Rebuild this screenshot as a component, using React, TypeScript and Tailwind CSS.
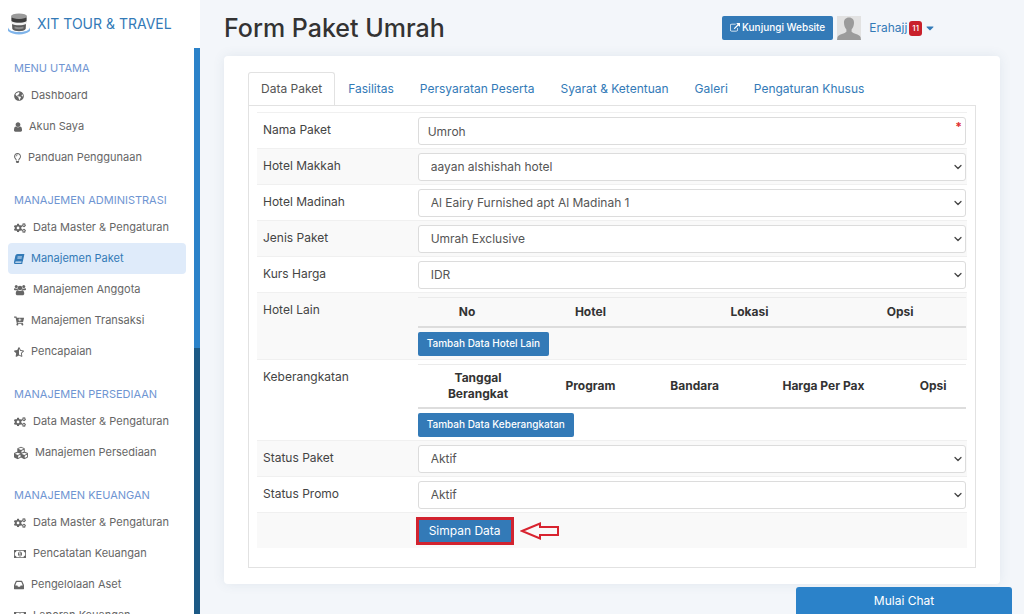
import React from "react";
import {
  FaGlobeAmericas,
  FaRegLightbulb,
  FaCogs,
  FaBook,
  FaCartPlus,
  FaStarHalfAlt,
  FaCubes,
  FaCaretDown,
} from "react-icons/fa";
import { ChevronDown } from "lucide-react";

type IconProps = { className?: string };

const UserIcon = ({ className }: IconProps) => (
  <svg viewBox="256 0 1280 1792" className={className} fill="currentColor" aria-hidden="true">
    <path d="M1536 1399q0 109-62.5 187t-150.5 78h-854q-88 0-150.5-78t-62.5-187q0-85 8.5-160.5t31.5-152 58.5-131 94-89 134.5-34.5q131 128 313 128t313-128q76 0 134.5 34.5t94 89 58.5 131 31.5 152 8.5 160.5zm-256-887q0 159-112.5 271.5t-271.5 112.5-271.5-112.5-112.5-271.5 112.5-271.5 271.5-112.5 271.5 112.5 112.5 271.5z" />
  </svg>
);

const UsersIcon = ({ className }: IconProps) => (
  <svg viewBox="0 0 24 24" className={className} fill="currentColor" aria-hidden="true">
    <circle cx="4.500" cy="5" r="3" />
    <circle cx="19.500" cy="5" r="3" />
    <circle cx="12" cy="8" r="4.600" />
    <path d="M2 8.500c1.500 1 3.500 1 5 .2.100 1.600.6 2.800 1.500 3.800H2.800C1 12.500 0 11.500 0 10.300c0-1.200.5-2.300 2-1.800zM22 8.500c-1.500 1-3.500 1-5 .2-.1 1.600-.6 2.800-1.500 3.800h5.700c1.800 0 2.800-1 2.800-2.200 0-1.200-.5-2.300-2-1.800z" />
    <path d="M7.500 12.500c2.500 2 6.500 2 9 0 2.500.2 4 3 4 6.500 0 2.200-1.300 3.500-3.500 3.500H7c-2.200 0-3.500-1.300-3.500-3.500 0-3.500 1.500-6.300 4-6.500z" />
  </svg>
);

const InboxIcon = ({ className }: IconProps) => (
  <svg viewBox="128 0 1536 1792" className={className} fill="currentColor" aria-hidden="true">
    <path d="M1151 960h316q-1-3-2.5-8.5t-2.5-7.5l-212-496h-708l-212 496q-1 3-2.5 8.5t-2.5 7.5h316l95 192h320zm513 30v482q0 26-19 45t-45 19h-1408q-26 0-45-19t-19-45v-482q0-62 25-123l238-552q10-25 36.5-42t52.5-17h832q26 0 52.5 17t36.5 42l238 552q25 61 25 123z" />
  </svg>
);

const MoneyIcon = ({ className }: IconProps) => (
  <svg viewBox="0 0 1920 1792" className={className} fill="currentColor" aria-hidden="true">
    <path d="M768 1152h384v-96h-128v-448h-114l-148 137 77 80q42-37 55-57h2v288h-128v96zm512-256q0 70-21 142t-59.5 134-101.5 101-138 39-138-39-101.5-101-59.5-134-21-142 21-142 59.5-134 101.5-101 138-39 138 39 101.5 101 59.5 134 21 142zm512 256v-512q-106 0-181-75t-75-181h-1152q0 106-75 181t-181 75v512q106 0 181 75t75 181h1152q0-106 75-181t181-75zm128-832v1152q0 26-19 45t-45 19h-1792q-26 0-45-19t-19-45v-1152q0-26 19-45t45-19h1792q26 0 45 19t19 45z" />
  </svg>
);

const ExternalLinkIcon = ({ className }: IconProps) => (
  <svg viewBox="0 0 1792 1792" className={className} fill="currentColor" aria-hidden="true">
    <path d="M1408 928v320q0 119-84.5 203.5t-203.5 84.5h-832q-119 0-203.5-84.5t-84.5-203.5v-832q0-119 84.5-203.5t203.5-84.5h704q14 0 23 9t9 23v64q0 14-9 23t-23 9h-704q-66 0-113 47t-47 113v832q0 66 47 113t113 47h832q66 0 113-47t47-113v-320q0-14 9-23t23-9h64q14 0 23 9t9 23zm384-864v512q0 26-19 45t-45 19-45-19l-176-176-652 652q-10 10-23 10t-23-10l-114-114q-10-10-10-23t10-23l652-652-176-176q-19-19-19-45t19-45 45-19h512q26 0 45 19t19 45z" />
  </svg>
);

const Logo = () => (
  <svg viewBox="0 0 24 24" className="size-6 shrink-0" aria-hidden="true">
    <path d="M1 15.500v3.500c5 4.500 17 4.500 22 0v-3.500c-1 3-5 4.500-11 4.500S2 18.500 1 15.500z" fill="#7fb4ea" />
    <path d="M4.500 4.500l.8 12.500c2 3 11.400 3 13.400 0l.8-12.500z" fill="#5a5a5a" />
    <ellipse cx="12" cy="4.300" rx="8" ry="2.800" fill="#9a9a9a" />
    <path d="M4.500 5.500c3.500 2 11.500 2 15 0v3.500c-3.500 2-11.500 2-15 0z" fill="#3d3d3d" />
    <path d="M4.800 9.500c3.500 1.800 10.900 1.800 14.400 0v2.500c-3.500 1.800-10.900 1.800-14.400 0z" fill="#f0f0f0" />
    <path d="M7.500 14.500c3 1 6 1 9 0v2c-3 1-6 1-9 0z" fill="#8d8d8d" />
  </svg>
);

const Avatar = () => (
  <svg viewBox="0 0 24 24" className="size-6 shrink-0" role="img" aria-label="Erahajj">
    <rect width="24" height="24" fill="#e2e2e2" />
    <path d="M12 1.500c-3.300 0-5.200 2.300-5 5.500.1 2.300.8 4.600 2.400 6.400v2.400c-1.200 1.800-7.600 2.200-8.900 5.200L0 24h24l-.5-3c-1.300-3-7.700-3.400-8.900-5.200v-2.400C16.200 11.600 16.900 9.300 17 7c.2-3.200-1.700-5.500-5-5.500z" fill="#9b9b9b" />
  </svg>
);

type Item = { label: string; Icon: React.ComponentType<IconProps>; icon: string; active?: boolean };

const sections: { title: string; items: Item[] }[] = [
  {
    title: "MENU UTAMA",
    items: [
      { label: "Dashboard", Icon: FaGlobeAmericas, icon: "size-[10px]" },
      { label: "Akun Saya", Icon: UserIcon, icon: "h-3 w-2" },
      { label: "Panduan Penggunaan", Icon: FaRegLightbulb, icon: "h-[10px] w-[7px]" },
    ],
  },
  {
    title: "MANAJEMEN ADMINISTRASI",
    items: [
      { label: "Data Master & Pengaturan", Icon: FaCogs, icon: "size-3" },
      { label: "Manajemen Paket", Icon: FaBook, icon: "size-[10px] -skew-x-12", active: true },
      { label: "Manajemen Anggota", Icon: UsersIcon, icon: "size-3" },
      { label: "Manajemen Transaksi", Icon: FaCartPlus, icon: "size-[10px]" },
      { label: "Pencapaian", Icon: FaStarHalfAlt, icon: "size-[10px]" },
    ],
  },
  {
    title: "MANAJEMEN PERSEDIAAN",
    items: [
      { label: "Data Master & Pengaturan", Icon: FaCogs, icon: "size-3" },
      { label: "Manajemen Persediaan", Icon: FaCubes, icon: "size-[14px]" },
    ],
  },
  {
    title: "MANAJEMEN KEUANGAN",
    items: [
      { label: "Data Master & Pengaturan", Icon: FaCogs, icon: "size-3" },
      { label: "Pencatatan Keuangan", Icon: MoneyIcon, icon: "size-3" },
      { label: "Pengelolaan Aset", Icon: InboxIcon, icon: "h-3 w-[10px]" },
      { label: "Laporan Keuangan", Icon: MoneyIcon, icon: "size-3" },
    ],
  },
];

const tabs = ["Data Paket", "Fasilitas", "Persyaratan Peserta", "Syarat & Ketentuan", "Galeri", "Pengaturan Khusus"];

function Row({ label, htmlFor, shaded, children }: { label?: string; htmlFor?: string; shaded?: boolean; children: React.ReactNode }) {
  return (
    <div className={`flex border-t border-[#f0f0f0] pt-1 pr-px pb-[3px] pl-[6px] ${shaded ? "bg-[#f9f9f9]" : ""}`}>
      <div className="w-[22%] shrink-0 pt-[5px]">
        {label && (
          htmlFor ? <label htmlFor={htmlFor}>{label}</label> : <span>{label}</span>
        )}
      </div>
      <div className="min-w-0 grow">{children}</div>
    </div>
  );
}

function SelectRow({ label, id, value, shaded }: { label: string; id: string; value: string; shaded?: boolean }) {
  return (
    <Row label={label} htmlFor={id} shaded={shaded}>
      <div className="relative">
        <select id={id} className="block h-7 w-full appearance-none rounded-[3px] border border-[#dcdcdc] bg-white px-3 text-[#555]">
          <option>{value}</option>
        </select>
        <ChevronDown className="pointer-events-none absolute top-2 right-[2px] size-3 text-[#444]" strokeWidth={2.5} />
      </div>
    </Row>
  );
}

function HeadTable({ heads, rowClass }: { heads: [string, string][]; rowClass: string }) {
  return (
    <table className="w-full table-fixed border-t border-b-2 border-t-[#ebebeb] border-b-[#dddddd]">
      <thead>
        <tr className={rowClass}>
          {heads.map(([h, w]) => (
            <th key={h} scope="col" className={`${w} px-2 text-center leading-4 font-bold text-[#333]`}>{h}</th>
          ))}
        </tr>
      </thead>
    </table>
  );
}

const smallButton = "mt-1 block h-6 rounded-[2px] bg-[#337ab7] px-[9px] text-[10px] font-medium text-white";

export default function App() {
  return (
    <div className="flex min-h-screen bg-[#f3f6fa] font-['Inter',sans-serif] text-xs text-[#444]">
      <aside className="sticky top-0 flex h-screen w-[200px] shrink-0 flex-col overflow-hidden bg-white">
        <a href="#" className="flex h-12 shrink-0 items-center gap-[6px] pl-[7px] text-sm whitespace-nowrap text-[#337ab7]">
          <Logo />
          XIT TOUR &amp; TRAVEL
        </a>
        <div className="flex min-h-0 grow">
          <nav className="min-w-0 grow space-y-[15px] overflow-hidden pt-2 pr-2 pl-2">
            {sections.map((s) => (
              <section key={s.title}>
                <h2 className="flex h-6 items-center pl-[6px] text-[11px] whitespace-nowrap text-[#6f95d2]">{s.title}</h2>
                {s.items.map(({ label, Icon, icon, active }) => (
                  <a
                    key={label}
                    href="#"
                    className={`flex h-[31px] items-center gap-[7px] rounded pl-[6px] text-[11px] whitespace-nowrap ${active ? "bg-[#dfebfa] text-[#337ab7]" : "text-[#666]"}`}
                  >
                    <Icon className={`${icon} shrink-0`} />
                    {label}
                  </a>
                ))}
              </section>
            ))}
          </nav>
          <div className="w-[6px] shrink-0 bg-[#1c5985]">
            <div className="h-[53%] bg-[#2b82c9]" />
          </div>
        </div>
      </aside>

      <main className="min-w-0 grow px-6 pb-[30px]">
        <header className="flex h-14 items-center justify-between">
          <h1 className="pt-[2px] text-[25px] font-medium text-[#333]">Form Paket Umrah</h1>
          <div className="mr-16 flex items-center gap-1">
            <a href="#" className="flex h-6 items-center gap-[2px] rounded-[2px] bg-[#337ab7] px-2 text-[10px] font-medium text-white">
              <ExternalLinkIcon className="size-[10px]" />
              Kunjungi Website
            </a>
            <Avatar />
            <button type="button" className="ml-1 flex items-center gap-[2px] text-[#337ab7]">
              Erahajj
              <span className="rounded-[3px] bg-[#c9202b] px-[3px] text-[8px] leading-[15px] font-medium text-white">11</span>
              <FaCaretDown className="size-3" />
            </button>
          </div>
        </header>

        <div className="rounded bg-white px-6 py-4 shadow-[0_0_12px_rgba(70,100,130,0.1)]">
          <div role="tablist" className="flex">
            {tabs.map((t, i) => (
              <button
                key={t}
                type="button"
                role="tab"
                aria-selected={i === 0}
                className={`h-[33px] rounded-t-[3px] border border-b-0 px-3 whitespace-nowrap ${i === 0 ? "relative -mb-px border-[#e2e2e2] bg-white text-[#555]" : "border-transparent text-[#337ab7]"}`}
              >
                {t}
              </button>
            ))}
          </div>

          <form className="border border-[#e2e2e2] px-2 pt-[6px] pb-[19px]" onSubmit={(e) => e.preventDefault()}>
            <Row label="Nama Paket" htmlFor="nama">
              <div className="relative">
                <input id="nama" defaultValue="Umroh" className="block h-7 w-full rounded-[3px] border border-[#dcdcdc] bg-white px-[9px] text-[#555]" />
                <span className="absolute top-[2px] right-1 font-bold text-[#e03030]">*</span>
              </div>
            </Row>
            <SelectRow label="Hotel Makkah" id="makkah" value="aayan alshishah hotel" shaded />
            <SelectRow label="Hotel Madinah" id="madinah" value="Al Eairy Furnished apt Al Madinah 1" />
            <SelectRow label="Jenis Paket" id="jenis" value="Umrah Exclusive" shaded />
            <SelectRow label="Kurs Harga" id="kurs" value="IDR" />
            <Row label="Hotel Lain" shaded>
              <HeadTable rowClass="h-[29px]" heads={[["No", "w-[18%]"], ["Hotel", "w-[27%]"], ["Lokasi", "w-[31%]"], ["Opsi", "w-[24%]"]]} />
              <button type="button" className={smallButton}>Tambah Data Hotel Lain</button>
            </Row>
            <Row label="Keberangkatan">
              <HeadTable
                rowClass="h-[44px]"
                heads={[["Tanggal Berangkat", "w-[22%]"], ["Program", "w-[19%]"], ["Bandara", "w-[19%]"], ["Harga Per Pax", "w-[28%]"], ["Opsi", "w-[12%]"]]}
              />
              <button type="button" className={smallButton}>Tambah Data Keberangkatan</button>
            </Row>
            <SelectRow label="Status Paket" id="status" value="Aktif" shaded />
            <SelectRow label="Status Promo" id="promo" value="Aktif" />
            <Row shaded>
              <div className="flex items-center gap-[6px]">
                <button type="submit" className="-ml-[2px] h-7 border-[3px] border-[#d2232f] bg-[#337ab7] px-[10px] text-white">Simpan Data</button>
                <svg viewBox="0 0 40 18" className="h-[18px] w-10" fill="none" stroke="#d8232f" strokeWidth="2" aria-hidden="true">
                  <path d="M2 9 20 1.500V5h18v8H20v3.500z" />
                </svg>
              </div>
            </Row>
          </form>
        </div>
      </main>

      <button type="button" className="fixed right-3 bottom-0 h-[27px] w-[216px] rounded-t-[3px] bg-[#2b82c9] text-white">
        Mulai Chat
      </button>
    </div>
  );
}
